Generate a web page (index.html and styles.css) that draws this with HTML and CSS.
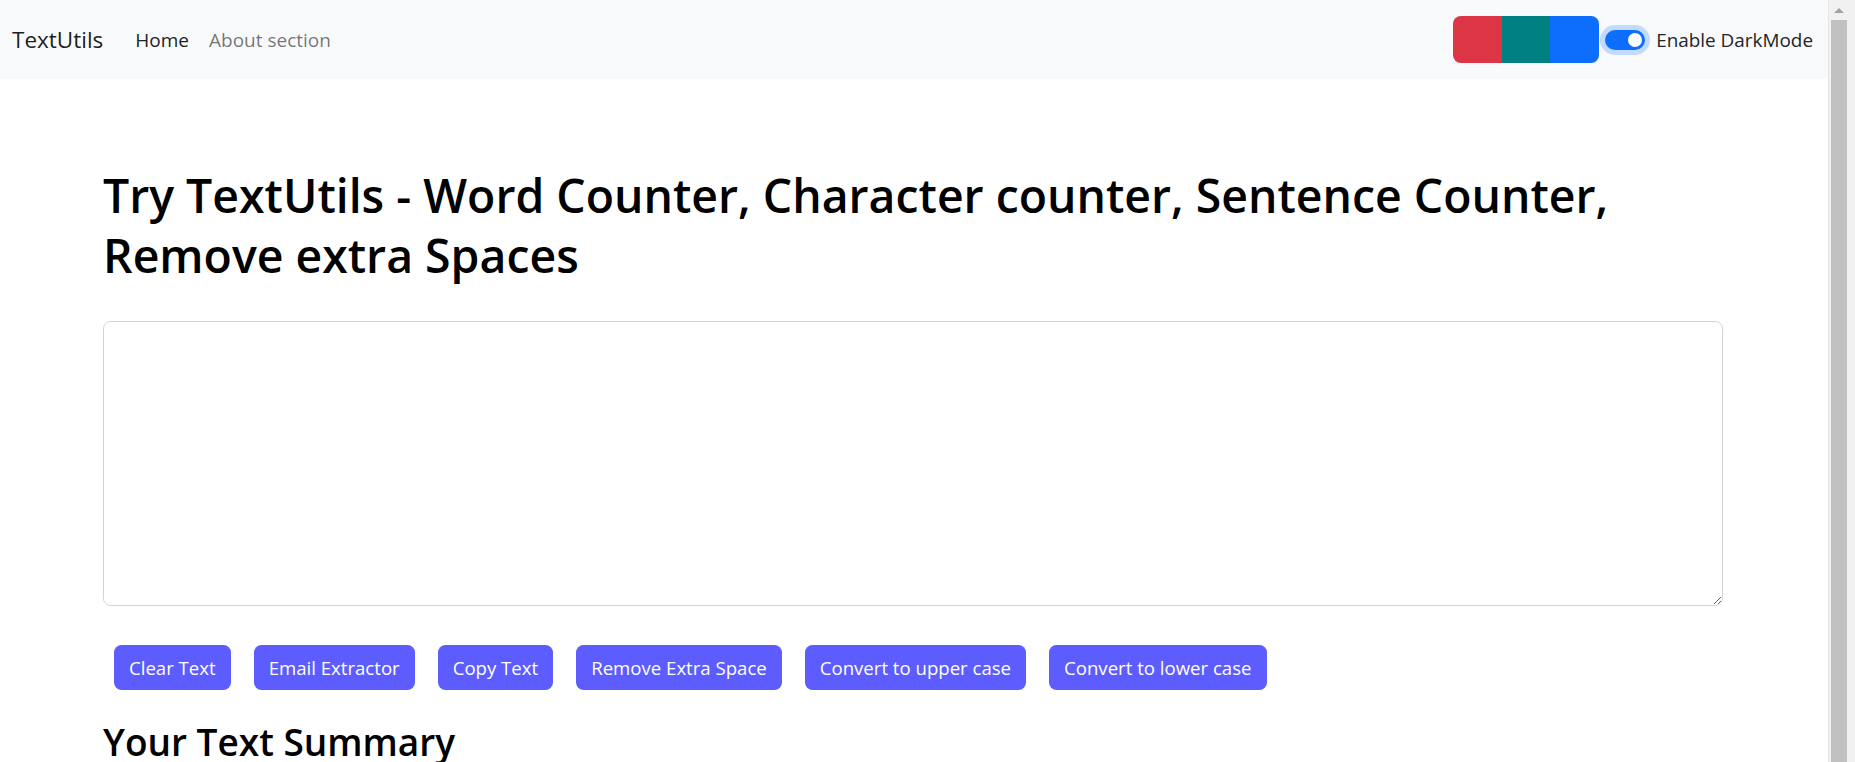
FILE: index.html
```html
<!DOCTYPE html>
<html lang="en">
<head>
<meta charset="utf-8">
<title>TextUtils</title>
<link rel="stylesheet" href="styles.css">
</head>
<body>
<div class="page">
  <div class="main">
    <nav class="navbar">
      <a class="brand" href="#">TextUtils</a>
      <ul class="nav">
        <li><a class="nav-link active" href="#">Home</a></li>
        <li><a class="nav-link" href="#">About section</a></li>
      </ul>
      <div class="nav-right">
        <div class="swatches">
          <button class="swatch red" type="button"></button>
          <button class="swatch teal" type="button"></button>
          <button class="swatch blue" type="button"></button>
        </div>
        <label class="switch">
          <span class="switch-track"><span class="switch-knob"></span></span>
          <span class="switch-label">Enable DarkMode</span>
        </label>
      </div>
    </nav>
    <div class="container">
      <h1 class="title">Try TextUtils - Word Counter, Character counter, Sentence Counter, Remove extra Spaces</h1>
      <textarea class="textbox"></textarea>
      <div class="actions">
        <button class="btn" type="button">Clear Text</button>
        <button class="btn" type="button">Email Extractor</button>
        <button class="btn" type="button">Copy Text</button>
        <button class="btn" type="button">Remove Extra Space</button>
        <button class="btn" type="button">Convert to upper case</button>
        <button class="btn" type="button">Convert to lower case</button>
      </div>
      <h2 class="summary">Your Text Summary</h2>
    </div>
  </div>
  <div class="scrollbar">
    <div class="scroll-arrow"></div>
    <div class="scroll-thumb"></div>
  </div>
</div>
</body>
</html>
```

FILE: styles.css
```css
* { box-sizing: border-box; }
html, body {
  margin: 0;
  padding: 0;
  height: 762px;
  overflow: hidden;
  background: #fff;
}
body {
  font-family: "Open Sans", "Noto Sans", sans-serif;
  font-size: 19px;
  color: #212529;
}
.page {
  display: flex;
  height: 762px;
}
.main {
  flex: 1;
  min-width: 0;
}
.navbar {
  height: 79px;
  background: #f8f9fa;
  display: flex;
  align-items: center;
  padding: 0 15px 0 12px;
}
.brand {
  font-size: 22.5px;
  color: rgba(0, 0, 0, .9);
  text-decoration: none;
  margin-right: 22px;
  line-height: 1.5;
}
.nav {
  list-style: none;
  margin: 0;
  padding: 0;
  display: flex;
}
.nav-link {
  display: block;
  padding: 0 10px;
  font-size: 19px;
  line-height: 30px;
  color: rgba(0, 0, 0, .55);
  text-decoration: none;
}
.nav-link.active { color: rgba(0, 0, 0, .9); }
.nav-right {
  margin-left: auto;
  display: flex;
  align-items: center;
}
.swatches {
  display: flex;
  height: 47px;
  border-radius: 8px;
  overflow: hidden;
}
.swatch {
  width: 49px;
  height: 47px;
  border: 0;
  padding: 0;
  margin: 0;
}
.swatch.red { background: #dc3545; }
.swatch.teal { background: #008080; width: 48px; }
.swatch.blue { background: #0d6efd; }
.switch {
  display: flex;
  align-items: center;
  margin-left: 6px;
}
.switch-track {
  width: 40px;
  height: 20px;
  border-radius: 10px;
  background: #0d6efd;
  box-shadow: 0 0 0 5px #c2dafd;
  display: flex;
  align-items: center;
  justify-content: flex-end;
  padding-right: 3px;
}
.switch-knob {
  width: 14px;
  height: 14px;
  border-radius: 50%;
  background: #fff;
}
.switch-label {
  margin-left: 11px;
  font-size: 18.9px;
  line-height: 30px;
  color: #212529;
}
.container {
  width: 1620px;
  margin-left: 103px;
  padding-top: 86px;
}
.title {
  margin: 0 0 36px;
  font-size: 46.4px;
  line-height: 60px;
  font-weight: 600;
  color: #000;
}
.textbox {
  display: block;
  width: 1620px;
  height: 285px;
  border: 1px solid #ced4da;
  border-radius: 7.5px;
  padding: 7px 15px;
  font-family: inherit;
  font-size: 19px;
  resize: vertical;
  background: #fff;
}
.actions {
  display: flex;
  gap: 23px;
  margin: 39px 0 0 11px;
}
.btn {
  height: 45px;
  padding: 0 15px;
  border: 0;
  border-radius: 7.5px;
  background: #5c5cff;
  color: #fff;
  font-family: inherit;
  font-size: 18.6px;
  line-height: 45px;
}
.summary {
  margin: 28px 0 0;
  font-size: 37px;
  line-height: 48px;
  font-weight: 600;
  color: #000;
}
.scrollbar {
  width: 27px;
  height: 762px;
  background: #f1f1f1;
  border-left: 1px solid #e6e6e6;
  display: flex;
  flex-direction: column;
  align-items: flex-start;
  padding-left: 2px;
}
.scroll-arrow {
  width: 0;
  height: 0;
  margin: 8px 0 0 3px;
  border-left: 5px solid transparent;
  border-right: 5px solid transparent;
  border-bottom: 5px solid #a3a3a3;
}
.scroll-thumb {
  margin-top: 7px;
  width: 16px;
  flex: 1;
  background: #c1c1c1;
}
```
